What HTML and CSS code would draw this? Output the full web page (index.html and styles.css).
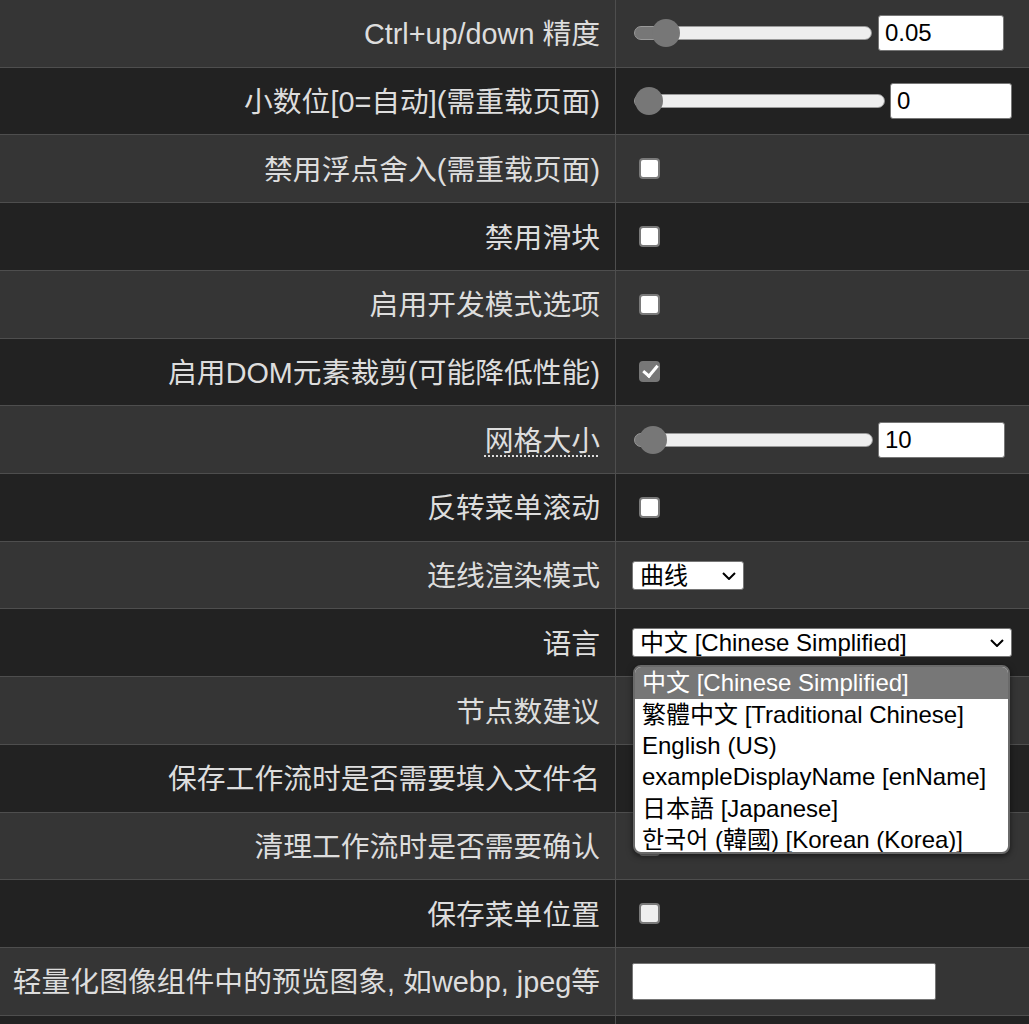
FILE: index.html
```html
<!DOCTYPE html>
<html lang="zh-CN">
<head>
<meta charset="utf-8">
<title>设置</title>
<link rel="stylesheet" href="styles.css">
</head>
<body>
<div class="settings">
  <div class="row">
    <div class="label">Ctrl+up/down 精度</div>
    <div class="ctrl">
      <input class="range r1" type="range" min="0" max="0.6" step="0.01" value="0.05" style="--fill:30px">
      <input class="num n1" type="number" value="0.05">
    </div>
  </div>
  <div class="row">
    <div class="label">小数位[0=自动](需重载页面)</div>
    <div class="ctrl">
      <input class="range r2" type="range" min="0" max="16" step="1" value="0" style="--fill:13px">
      <input class="num n2" type="number" value="0">
    </div>
  </div>
  <div class="row">
    <div class="label">禁用浮点舍入(需重载页面)</div>
    <div class="ctrl"><input class="cb" type="checkbox"></div>
  </div>
  <div class="row">
    <div class="label">禁用滑块</div>
    <div class="ctrl"><input class="cb" type="checkbox"></div>
  </div>
  <div class="row">
    <div class="label">启用开发模式选项</div>
    <div class="ctrl"><input class="cb" type="checkbox"></div>
  </div>
  <div class="row">
    <div class="label">启用DOM元素裁剪(可能降低性能)</div>
    <div class="ctrl"><input class="cb" type="checkbox" checked></div>
  </div>
  <div class="row">
    <div class="label"><span class="abbr" title="网格大小">网格大小</span></div>
    <div class="ctrl">
      <input class="range r3" type="range" min="1" max="500" step="1" value="10" style="--fill:17px">
      <input class="num n3" type="number" value="10">
    </div>
  </div>
  <div class="row">
    <div class="label">反转菜单滚动</div>
    <div class="ctrl"><input class="cb" type="checkbox"></div>
  </div>
  <div class="row">
    <div class="label">连线渲染模式</div>
    <div class="ctrl">
      <div class="select s1">
        <select>
          <option selected>曲线</option>
          <option>直线</option>
          <option>折线</option>
          <option>隐藏</option>
        </select>
        <svg class="chev" width="14" height="8" viewBox="0 0 14 8"><path d="M1 1l6 6 6-6" fill="none" stroke="#000" stroke-width="2"/></svg>
      </div>
    </div>
  </div>
  <div class="row lang-row">
    <div class="label">语言</div>
    <div class="ctrl">
      <div class="select s2">
        <select>
          <option selected>中文 [Chinese Simplified]</option>
          <option>繁體中文 [Traditional Chinese]</option>
          <option>English (US)</option>
          <option>exampleDisplayName [enName]</option>
          <option>日本語 [Japanese]</option>
          <option>한국어 (韓國) [Korean (Korea)]</option>
        </select>
        <svg class="chev" width="14" height="8" viewBox="0 0 14 8"><path d="M1 1l6 6 6-6" fill="none" stroke="#000" stroke-width="2"/></svg>
        <ul class="dropdown">
          <li class="sel">中文 [Chinese Simplified]</li>
          <li>繁體中文 [Traditional Chinese]</li>
          <li>English (US)</li>
          <li>exampleDisplayName [enName]</li>
          <li>日本語 [Japanese]</li>
          <li>한국어 (韓國) [Korean (Korea)]</li>
        </ul>
      </div>
    </div>
  </div>
  <div class="row">
    <div class="label">节点数建议</div>
    <div class="ctrl"><input class="cb" type="checkbox"></div>
  </div>
  <div class="row">
    <div class="label">保存工作流时是否需要填入文件名</div>
    <div class="ctrl"><input class="cb" type="checkbox"></div>
  </div>
  <div class="row">
    <div class="label">清理工作流时是否需要确认</div>
    <div class="ctrl"><input class="cb" type="checkbox"></div>
  </div>
  <div class="row">
    <div class="label">保存菜单位置</div>
    <div class="ctrl"><input class="cb dim" type="checkbox"></div>
  </div>
  <div class="row">
    <div class="label">轻量化图像组件中的预览图象, 如webp, jpeg等</div>
    <div class="ctrl"><input class="text" type="text"></div>
  </div>
  <div class="row">
    <div class="label"></div>
    <div class="ctrl"></div>
  </div>
</div>
</body>
</html>
```

FILE: styles.css
```css
* {
  box-sizing: border-box;
}

html,
body {
  margin: 0;
  background: #222;
}

body {
  font-family: "Liberation Sans", "Noto Sans CJK SC", sans-serif;
  color: #ddd;
  overflow: hidden;
}

.settings {
  display: flex;
  flex-direction: column;
}

.row {
  display: grid;
  grid-template-columns: 616px 1fr;
  height: 67.73px;
  flex: none;
  border-bottom: 1px solid #4e4e4e;
  background: #353535;
}

.row:nth-child(even) {
  background: #222;
}

.lang-row {
  position: relative;
  z-index: 5;
}

.label {
  display: flex;
  align-items: center;
  justify-content: flex-end;
  padding-right: 15px;
  padding-bottom: 3px;
  border-right: 1px solid #4e4e4e;
  font-size: 28.8px;
  white-space: nowrap;
}

.abbr {
  text-decoration: underline dotted #ddd;
  text-underline-offset: 5px;
  text-decoration-thickness: 2px;
}

.ctrl {
  display: flex;
  align-items: center;
  padding-left: 16px;
}

/* range sliders */
.range {
  -webkit-appearance: none;
  appearance: none;
  margin: 0 0 0 2px;
  height: 28px;
  background: transparent;
  flex: none;
}

.range::-webkit-slider-runnable-track {
  height: 14px;
  border-radius: 7px;
  border: 1px solid #9a9a9a;
  background: linear-gradient(to right, #777 var(--fill), #eee var(--fill));
}

.range::-webkit-slider-thumb {
  -webkit-appearance: none;
  appearance: none;
  width: 28px;
  height: 28px;
  border-radius: 50%;
  background: #777;
  margin-top: -8px;
  border: none;
}

.r1 { width: 238px; }
.r2 { width: 251px; }
.r3 { width: 239px; }

.num {
  height: 36px;
  font: 24px "Liberation Sans", sans-serif;
  padding: 0 6px;
  border: 1px solid #767676;
  border-radius: 3px;
  background: #fff;
  color: #000;
  flex: none;
  -moz-appearance: textfield;
}

.num::-webkit-inner-spin-button,
.num::-webkit-outer-spin-button {
  -webkit-appearance: none;
  margin: 0;
}

.n1 { width: 126px; margin-left: 6px; }
.n2 { width: 122px; margin-left: 5px; }
.n3 { width: 127px; margin-left: 5px; }

/* checkboxes */
.cb {
  -webkit-appearance: none;
  appearance: none;
  margin: 0 0 0 7px;
  width: 21px;
  height: 21px;
  border: 2px solid #7a7a7a;
  border-radius: 4px;
  background: #fff;
  position: relative;
}

.cb.dim {
  background: #efefef;
}

.cb:checked {
  background: #777;
  border-color: #777;
}

.cb:checked::after {
  content: "";
  position: absolute;
  left: 5px;
  top: -1px;
  width: 6px;
  height: 12px;
  border: solid #fff;
  border-width: 0 3.5px 3.5px 0;
  transform: rotate(40deg);
}

/* selects */
.select {
  position: relative;
  display: inline-flex;
}

.select select {
  -webkit-appearance: none;
  appearance: none;
  height: 29px;
  font: 24px "Liberation Sans", "Noto Sans CJK SC", sans-serif;
  line-height: 27px;
  padding: 0 30px 0 7px;
  border: 1px solid #767676;
  border-radius: 3px;
  background: #fff;
  color: #000;
}

.s1 select { width: 112px; }
.s2 select { width: 380px; }

.chev {
  position: absolute;
  right: 8px;
  top: 11px;
  pointer-events: none;
}

.dropdown {
  position: absolute;
  left: 1px;
  top: 37px;
  width: 377px;
  height: 189px;
  margin: 0;
  padding: 0;
  list-style: none;
  background: #fff;
  border: 2px solid #6a6a6a;
  border-radius: 8px;
  overflow: hidden;
  box-shadow: 0 2px 6px rgba(0, 0, 0, 0.55);
}

.dropdown li {
  height: 31.3px;
  line-height: 31px;
  padding-left: 7px;
  font-size: 24px;
  color: #000;
  white-space: nowrap;
}

.dropdown li.sel {
  background: #777;
  color: #fff;
}

.text {
  width: 304px;
  height: 37px;
  border: 1px solid #767676;
  border-radius: 2px;
  background: #fff;
  font: 24px "Liberation Sans", sans-serif;
}
```
